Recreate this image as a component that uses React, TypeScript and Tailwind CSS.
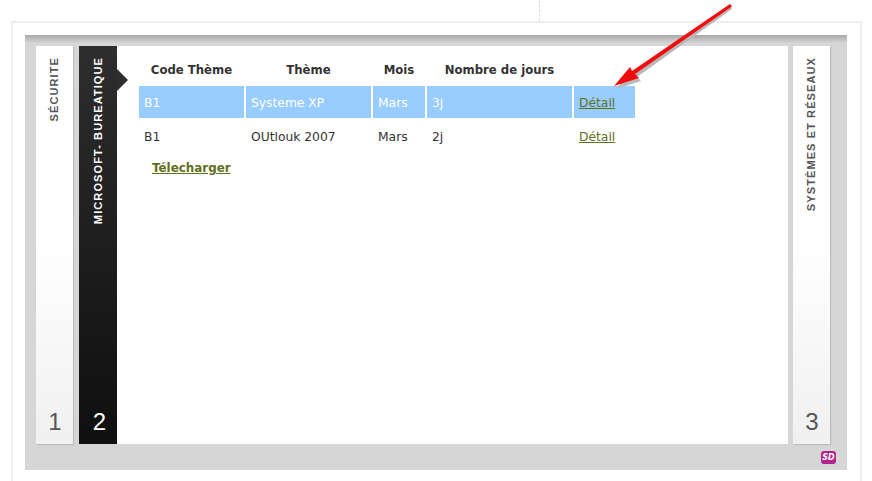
const rows = [
  { code: 'B1', theme: 'Systeme XP', mois: 'Mars', jours: '3j', active: true },
  { code: 'B1', theme: 'OUtlouk 2007', mois: 'Mars', jours: '2j', active: false },
]

const headWidths = ['w-[105px]', 'w-[125px]', 'w-[52px]', 'w-[145px]']
const cellWidths = ['w-[107px]', 'w-[127px]', 'w-[54px]', 'w-[147px]']

function SideTab({ label, num, dark }: { label: string; num: string; dark?: boolean }) {
  return (
    <div
      className={`relative flex flex-col items-center justify-between font-['Liberation_Sans',sans-serif] ${
        dark
          ? 'w-[38px] bg-gradient-to-b from-[#2e2e2e] to-[#0f0f0f] text-white'
          : 'w-[37px] bg-gradient-to-b from-white from-[50%] to-[#f0f0f0] text-[#555] shadow-[1px_1px_1px_#bbb]'
      }`}
    >
      <span className="mt-[11px] rotate-180 text-[11px] font-bold tracking-[1.1px] whitespace-nowrap [writing-mode:vertical-rl]">
        {label}
      </span>
      <span className={`mb-[8px] text-[24px] leading-[28px] ${dark ? 'pl-[3px]' : 'pl-[1px]'}`}>{num}</span>
      {dark && (
        <div className="absolute top-[23px] -right-[11px] h-0 w-0 border-y-[11px] border-l-[11px] border-y-transparent border-l-[#2e2e2e]" />
      )}
    </div>
  )
}

function Arrow() {
  return (
    <svg className="absolute top-0 left-[600px] h-[95px] w-[140px]" viewBox="0 0 140 95">
      <path d="M131 7 L132 9 L37 77 L41 81 L16 89 L32 70 L34 73 Z" fill="#b8b8b8" />
      <path d="M130 4 L132 6.5 L35 74 L39 78 L14 86 L30 67 L32 71 Z" fill="#f00d0d" />
    </svg>
  )
}

export default function App() {
  return (
    <div className="relative h-[481px] w-[872px] overflow-hidden bg-white font-['DejaVu_Sans',sans-serif] text-[12.3px] text-[#333]">
      <div className="absolute top-0 left-[539px] h-[21px] border-l border-dashed border-[#ddd]" />
      <div className="mt-[21px] ml-[11px] h-[470px] w-[851px] border-t-2 border-r-2 border-l-2 border-[#eeeeee] px-[12px] pt-[12px]">
        <div className="h-[435px] w-[822px] bg-[#d6d6d6] bg-gradient-to-b from-[#a8a8a8] from-[0px] to-[#d6d6d6] to-[8px] pt-[11px]">
          <div className="flex h-[398px] pl-[11px]">
            <SideTab label="SÉCURITE" num="1" />
            <div className="w-[6px]" />
            <SideTab label="MICROSOFT- BUREATIQUE" num="2" dark />
            <div className="h-full w-[671px] bg-white pt-[16px] pl-[22px]">
              <div className="flex h-[24px] text-[11.7px] font-bold">
                {['Code Thème', 'Thème', 'Mois', 'Nombre de jours'].map((h, i) => (
                  <div key={h} className={`${headWidths[i]} mr-[2px] text-center leading-[17px]`}>
                    {h}
                  </div>
                ))}
              </div>
              {rows.map((r) => (
                <div
                  key={r.theme}
                  className={`flex h-[32px] w-[496px] items-center ${r.active ? 'mb-[2px] bg-[#99ccff] text-white' : ''}`}
                >
                  {[r.code, r.theme, r.mois, r.jours].map((v, i) => (
                    <div
                      key={i}
                      className={`${cellWidths[i]} flex h-[32px] items-center border-r-2 pt-[2px] pl-[5px] ${r.active ? 'border-white' : 'border-transparent'}`}
                    >
                      {v}
                    </div>
                  ))}
                  <a className="pt-[2px] pl-[5px] text-[#5f7020] underline">Détail</a>
                </div>
              ))}
              <a className="mt-[8px] ml-[13px] block text-[11.9px] font-bold text-[#5f7020] underline">Télecharger</a>
            </div>
            <div className="w-[5px]" />
            <SideTab label="SYSTÈMES ET RÉSEAUX" num="3" />
          </div>
          <div className="mt-[7px] flex justify-end pr-[11px]">
            <div className="h-[13px] w-[15px] rounded-[3px] bg-[#b0228c] text-center text-[8px] leading-[13px] font-bold text-white italic">
              SD
            </div>
          </div>
        </div>
      </div>
      <Arrow />
    </div>
  )
}
